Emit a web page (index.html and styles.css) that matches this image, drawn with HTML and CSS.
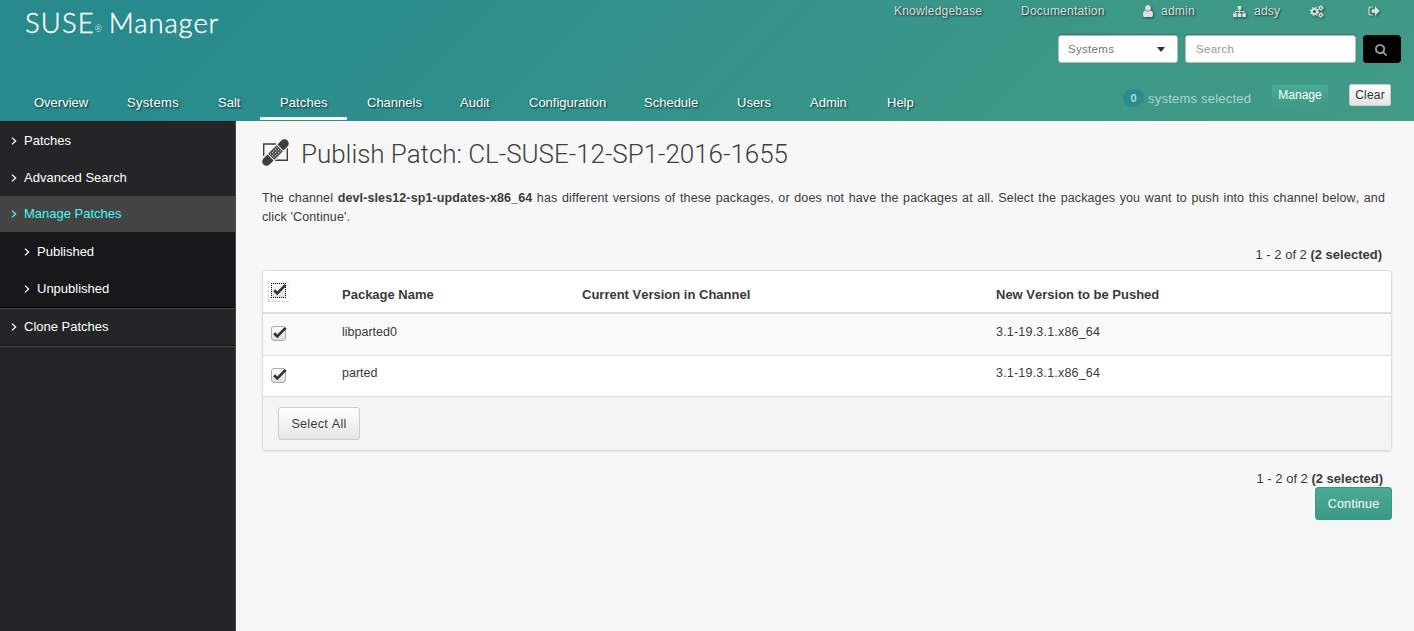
FILE: index.html
```html
<!DOCTYPE html>
<html lang="en">
<head>
<meta charset="utf-8">
<title>SUSE Manager - Publish Patch</title>
<link rel="stylesheet" href="styles.css">
</head>
<body>
<svg class="defs" width="0" height="0">
  <symbol id="chev" viewBox="0 0 6 8"><path d="M1 .6l3.600 3.400L1 7.400" fill="none" stroke="currentColor" stroke-width="1.300"/></symbol>
  <symbol id="tick" viewBox="0 0 16 15"><path d="M3.200 7.200l3.100 3.200L14.600 1.900" fill="none" stroke="#2e3436" stroke-width="2.700"/></symbol>
</svg>
<header class="top">
  <div class="brand-side">
    <div class="logo"><span class="suse">SUSE</span><span class="reg">®</span><span class="mgr">Manager</span></div>
    <nav class="nav">
      <a class="n1">Overview</a><a class="n2">Systems</a><a class="n3">Salt</a><a class="n4 active">Patches</a><a class="n5">Channels</a><a class="n6">Audit</a><a class="n7">Configuration</a><a class="n8">Schedule</a><a class="n9">Users</a><a class="n10">Admin</a><a class="n11">Help</a>
    </nav>
  </div>
  <div class="tools">
    <div class="links">
      <a class="kb">Knowledgebase</a>
      <a class="doc">Documentation</a>
      <a class="user"><svg width="10" height="12" viewBox="0 128 1280 1536"><path fill="currentColor" d="M1280 1399q0 109-62.500 187t-150.500 78h-854q-88 0-150.500-78t-62.500-187q0-85 8.500-160.500t31.500-152 58.500-131 94-89 134.500-34.500q131 128 313 128t313-128q76 0 134.500 34.500t94 89 58.500 131 31.500 152 8.500 160.500zm-256-887q0 159-112.500 271.500t-271.500 112.500-271.500-112.500-112.500-271.500 112.500-271.500 271.500-112.500 271.500 112.500 112.500 271.500z"/></svg><span>admin</span></a>
      <a class="org"><svg width="13" height="11" viewBox="0 0 14 12"><path fill="currentColor" d="M5 0h4v4H5zM0 8h4v4H0zM5 8h4v4H5zM10 8h4v4h-4z"/><path fill="none" stroke="currentColor" d="M7 4v4M2 8V6h10v2"/></svg><span>adsy</span></a>
      <a class="cogs"><svg width="14" height="13" viewBox="0 0 14 13"><g fill="none" stroke="currentColor"><circle cx="4.500" cy="6.500" r="2.600" stroke-width="2"/><circle cx="4.500" cy="6.500" r="4" stroke-width="1.400" stroke-dasharray="1.570 1.570"/><circle cx="10.800" cy="3" r="1.500" stroke-width="1.300"/><circle cx="10.800" cy="3" r="2.400" stroke-width=".9" stroke-dasharray="1.250 1.250"/><circle cx="10.800" cy="10" r="1.500" stroke-width="1.300"/><circle cx="10.800" cy="10" r="2.400" stroke-width=".9" stroke-dasharray="1.250 1.250"/></g></svg></a>
      <a class="out"><svg width="12" height="10" viewBox="0 0 12 10"><path d="M4.500 1H2.300Q1 1 1 2.300v5.400Q1 9 2.300 9h2.200" fill="none" stroke="currentColor" stroke-width="1.200"/><path fill="currentColor" d="M3.700 3.200H7V.3L11.800 5 7 9.700V6.800H3.700z"/></svg></a>
    </div>
    <div class="search-row">
      <div class="select"><span>Systems</span><svg width="8" height="5" viewBox="0 0 8 5"><path d="M0 0h8L4.500 4.600h-1z" fill="#333"/></svg></div>
      <div class="input">Search</div>
      <div class="go"><svg width="12" height="12" viewBox="64 128 1664 1664"><path fill="currentColor" d="M1216 832q0-185-131.500-316.500t-316.500-131.500-316.500 131.500-131.500 316.500 131.500 316.500 316.500 131.500 316.500-131.500 131.500-316.500zm512 832q0 52-38 90t-90 38q-54 0-90-38l-343-342q-179 124-399 124-143 0-273.500-55.500t-225-150-150-225-55.500-273.500 55.500-273.500 150-225 225-150 273.500-55.500 273.500 55.500 225 150 150 225 55.500 273.500q0 220-124 399l343 343q37 37 37 90z"/></svg></div>
    </div>
    <div class="set-row"><b class="badge">0</b><span class="sel-text">systems selected</span><span class="btn-manage">Manage</span><span class="btn-clear">Clear</span></div>
  </div>
</header>
<div class="body">
  <aside class="side">
    <a><svg><use href="#chev"/></svg>Patches</a>
    <a><svg><use href="#chev"/></svg>Advanced Search</a>
    <a class="current"><svg><use href="#chev"/></svg>Manage Patches</a>
    <div class="sub">
      <a class="pub"><svg><use href="#chev"/></svg>Published</a>
      <a><svg><use href="#chev"/></svg>Unpublished</a>
    </div>
    <a class="clone"><svg><use href="#chev"/></svg>Clone Patches</a>
  </aside>
  <main class="main">
    <h1><svg width="27" height="27" viewBox="0 0 27 27"><path d="M14 5H1.700V17M13 21.300h12.300V9" fill="none" stroke="#3e3e3e" stroke-width="1.400"/><g transform="rotate(-45 13.500 13.500)"><rect x="-4" y="8" width="35" height="11" rx="5.500" fill="#f7f7f7"/><path fill="#3e3e3e" d="M6.500 9.200H.8a4.300 4.300 0 0 0 0 8.600h5.700zM20.500 9.200h5.700a4.300 4.300 0 0 1 0 8.600h-5.700zM7.500 9.200h12v8.600h-12z"/><path d="M8.500 11.200h10M8.500 13.500h10M8.500 15.800h10" stroke="#f7f7f7" stroke-width="1.100" stroke-dasharray="1.100 1.100"/></g></svg><span>Publish Patch: CL-SUSE-12-SP1-2016-1655</span></h1>
    <p class="intro">The channel <b>devl-sles12-sp1-updates-x86_64</b> has different versions of these packages, or does not have the packages at all. Select the packages you want to push into this channel below, and click 'Continue'.</p>
    <div class="count">1 - 2 of 2 <b>(2 selected)</b></div>
    <section class="panel">
      <div class="row head"><span class="focus"><span class="box dotted"><svg width="16" height="15"><use href="#tick"/></svg></span></span><b>Package Name</b><b class="cv">Current Version in Channel</b><b>New Version to be Pushed</b></div>
      <div class="row odd"><span class="box"><svg width="16" height="15"><use href="#tick"/></svg></span><span>libparted0</span><span></span><span class="ver">3.1-19.3.1.x86_64</span></div>
      <div class="row even"><span class="box"><svg width="16" height="15"><use href="#tick"/></svg></span><span>parted</span><span></span><span class="ver">3.1-19.3.1.x86_64</span></div>
      <div class="foot"><span class="btn-all">Select All</span></div>
    </section>
    <div class="count bottom">1 - 2 of 2 <b>(2 selected)</b></div>
    <div class="actions"><span class="btn-go">Continue</span></div>
  </main>
</div>
</body>
</html>
```
FILE: styles.css
```css
* { box-sizing: border-box; }
body { margin: 0; height: 631px; overflow: hidden; background: #f7f7f7; color: #3a3a3a; font: 13px/19px "Liberation Sans", Arial, sans-serif; font-kerning: none; white-space: nowrap; }
.defs { display: block; position: absolute; }
.top { display: flex; height: 121px; background: linear-gradient(135deg, #27898c 0%, #2b8d8d 25%, #3c9887 75%, #419a87 100%); color: #fff; }
.brand-side { width: 894px; flex: none; display: flex; flex-direction: column; justify-content: space-between; }
.logo { display: flex; padding: 7px 0 0 25px; font: 300 27.500px/32px Lato, sans-serif; }
.suse, .mgr { -webkit-text-stroke: .35px #fff; }
.suse { letter-spacing: 1.100px; }
.mgr { letter-spacing: .9px; }
.reg { width: 8px; font-size: 9px; line-height: 44px; margin: 0 6px 0 0; }
.nav { display: flex; padding-left: 14px; height: 37px; line-height: 37px; text-shadow: 1px 1px 2px rgba(0,0,0,.75); }
.nav a { flex: none; padding-left: 20px; height: 36px; }
.nav .active { border-bottom: 3px solid #fff; letter-spacing: .1px; }
.n1 { width: 93px; } .n2 { width: 91px; letter-spacing: .3px; } .n3 { width: 62px; } .n4 { width: 87px; }
.n5 { width: 93px; margin-left: 0; } .n6 { width: 69px; } .n7 { width: 115px; } .n8 { width: 93px; }
.n9 { width: 73px; } .n10 { width: 77px; } .n11 { width: 47px; }
.tools { flex: none; width: 520px; display: flex; flex-direction: column; align-items: flex-end; padding-right: 13px; }
.links { display: flex; height: 35px; padding-top: 1px; font-size: 12px; line-height: 21px; color: #ddd; letter-spacing: .22px; text-shadow: 1px 1px 2px rgba(0,0,0,.7); }
.links a { display: flex; height: 21px; align-items: center; }
.links svg { filter: drop-shadow(1px 1px 1px rgba(0,0,0,.5)); margin-top: -1px; }
.kb { width: 127px; } .doc { width: 122px; }
.user { width: 90px; gap: 8px; } .org { width: 77px; gap: 8px; } .cogs { width: 58px; } .out { width: 33px; }
.search-row { display: flex; gap: 7px; height: 28px; font-size: 11.500px; line-height: 26px; letter-spacing: .3px; }
.select, .input { border: 1px solid #bbb; border-radius: 3px; background: #fff; box-shadow: 0 -1px 1px rgba(0,0,0,.22); padding: 0 10px; }
.select { width: 120px; display: flex; justify-content: space-between; align-items: center; color: #777; padding: 0 12px 0 9px; }
.input { width: 171px; color: #999; }
.go { width: 38px; height: 28px; display: grid; place-items: center; background: #000; color: #999; border-radius: 4px; }
.go svg { margin-right: 2px; margin-top: 2px; }
.set-row { display: flex; align-items: flex-start; padding: 21px 10px 0 0; line-height: 20px; }
.badge { margin-top: 5px; width: 21px; height: 18px; border-radius: 9px; background: #2c8b8e; color: #b7dcd6; font-size: 11px; line-height: 18px; text-align: center; }
.sel-text { width: 128px; padding: 5px 0 0 4px; color: #add5cc; letter-spacing: .22px; }
.btn-manage { width: 56px; height: 21px; margin: 1px 21px 0 0; background: linear-gradient(#48ab96, #409a86); border-radius: 2px; font-size: 12px; text-align: center; line-height: 20px; }
.btn-clear { width: 42px; height: 22px; border: 1px solid #ccc; border-radius: 2px; background: linear-gradient(#fff, #e4e4e4); color: #333; font-size: 12px; text-align: center; line-height: 21px; letter-spacing: .2px; }
.body { display: flex; height: 510px; }
.side { width: 236px; background: #242527; color: #fff; border-right: 1px solid #484848; border-top: 1px solid #1b1b1c; }
.side a { display: flex; align-items: center; height: 37px; padding-left: 11px; gap: 7px; }
.side svg { width: 6px; height: 8px; }
.side a.current { background: #444; color: #4ef5f5; height: 36px; padding-bottom: 1px; }
.sub { height: 76px; padding-top: 1px; background: #17181a; border-bottom: 1px solid #000; }
.sub a { padding-left: 24px; }
.side .clone { height: 38px; padding-bottom: 1px; border-top: 1px solid #4a4a4b; border-bottom: 1px solid #111; box-shadow: 0 1px #4a4a4b; }
.main { width: 1178px; padding: 16px 22px 0 26px; }
h1 { display: flex; align-items: center; gap: 12px; margin: 0 0 17px; height: 35px; font: 300 26px/35px Roboto, sans-serif; letter-spacing: -.04px; color: #3e3e3e; }
h1 svg { margin-top: -5px; overflow: visible; }
.intro { margin: 0; width: 1123px; white-space: normal; text-align: justify; font-size: 12.500px; letter-spacing: .12px; }
.count { text-align: right; padding: 18px 10px 0 0; height: 43px; }
.panel { border: 1px solid #ddd; border-radius: 4px; box-shadow: 0 1px 2px rgba(0,0,0,.1); overflow: hidden; height: 181px; }
.row { display: grid; grid-template-columns: 71px 239px 415px 1fr; padding-left: 8px; height: 41px; border-bottom: 1px solid #ddd; font-size: 12.500px; line-height: 35px; }
.row.head { background: #fff; height: 43px; border-bottom: 2px solid #ddd; font-size: 13px; line-height: 47px; }
.row.odd { background: #f9f9f9; height: 42px; line-height: 37px; }
.row.even { background: #fff; }
.ver { letter-spacing: .2px; }
.cv { padding-left: 1px; }
.box { display: block; width: 15px; height: 15px; margin-top: 12px; border: 1px solid #aaa; border-radius: 3px; background: linear-gradient(#fff, #ddd); }
.box svg { display: block; margin: -1px 0 0 -1px; overflow: visible; }
.focus { width: 21px; height: 21px; margin: 10px 0 0 -3px; border: 1px dashed #ccc; padding: 1px 2px; border-top-color: #eee; border-right-color: #eee; }
.box.dotted { margin: 0; border: 1px dotted #000; border-radius: 0; }
.foot { background: #f4f4f4; height: 54px; padding: 10px 15px; }
.btn-all { display: block; width: 82px; height: 33px; border: 1px solid #ccc; border-radius: 3px; background: linear-gradient(#fff, #e6e6e6); text-align: center; line-height: 32px; letter-spacing: .3px; font-size: 12.500px; }
.count.bottom { height: 36px; padding: 18px 9px 0 0; }
.actions { display: flex; justify-content: flex-end; }
.btn-go { width: 77px; height: 33px; border: 1px solid #3b9682; border-radius: 3px; background: linear-gradient(#48ab96, #3e9883); color: #fff; text-align: center; line-height: 32px; font-size: 12.500px; letter-spacing: .2px; }
```
